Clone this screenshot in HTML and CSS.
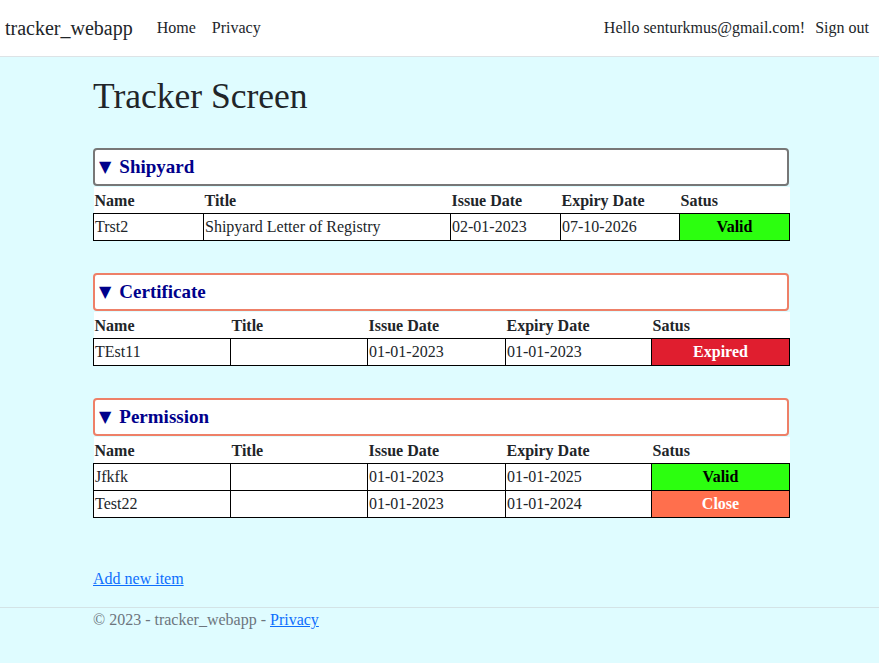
FILE: index.html
```html
<!DOCTYPE html>
<html lang="en">
<head>
<meta charset="utf-8">
<title>Tracker Screen - tracker_webapp</title>
<link rel="stylesheet" href="styles.css">
</head>
<body>
<header class="navbar">
  <div class="nav-left">
    <a class="brand" href="#">tracker_webapp</a>
    <nav class="nav-links">
      <a href="#">Home</a>
      <a href="#">Privacy</a>
    </nav>
  </div>
  <div class="nav-right">
    <span>Hello senturkmus@gmail.com!</span>
    <a href="#">Sign out</a>
  </div>
</header>

<main class="page">
  <div class="container">
    <h1 class="title">Tracker Screen</h1>

    <details class="group" open>
      <summary class="group-head gray"><span class="arrow">▼</span>Shipyard</summary>
      <table class="items">
        <colgroup><col class="s1"><col class="s2"><col class="s3"><col class="s4"><col class="s5"></colgroup>
        <thead><tr><th>Name</th><th>Title</th><th>Issue Date</th><th>Expiry Date</th><th>Satus</th></tr></thead>
        <tbody>
          <tr><td>Trst2</td><td>Shipyard Letter of Registry</td><td>02-01-2023</td><td>07-10-2026</td><td class="st valid">Valid</td></tr>
        </tbody>
      </table>
    </details>

    <details class="group" open>
      <summary class="group-head salmon"><span class="arrow">▼</span>Certificate</summary>
      <table class="items">
        <colgroup><col class="c1"><col class="c2"><col class="c3"><col class="c4"><col class="c5"></colgroup>
        <thead><tr><th>Name</th><th>Title</th><th>Issue Date</th><th>Expiry Date</th><th>Satus</th></tr></thead>
        <tbody>
          <tr><td>TEst11</td><td></td><td>01-01-2023</td><td>01-01-2023</td><td class="st expired">Expired</td></tr>
        </tbody>
      </table>
    </details>

    <details class="group" open>
      <summary class="group-head salmon"><span class="arrow">▼</span>Permission</summary>
      <table class="items">
        <colgroup><col class="c1"><col class="c2"><col class="c3"><col class="c4"><col class="c5"></colgroup>
        <thead><tr><th>Name</th><th>Title</th><th>Issue Date</th><th>Expiry Date</th><th>Satus</th></tr></thead>
        <tbody>
          <tr><td>Jfkfk</td><td></td><td>01-01-2023</td><td>01-01-2025</td><td class="st valid">Valid</td></tr>
          <tr><td>Test22</td><td></td><td>01-01-2023</td><td>01-01-2024</td><td class="st close">Close</td></tr>
        </tbody>
      </table>
    </details>

    <p class="add"><a href="#">Add new item</a></p>
  </div>
</main>

<footer class="footer">
  <div class="container">© 2023 - tracker_webapp - <a href="#">Privacy</a></div>
</footer>
</body>
</html>
```

FILE: styles.css
```css
html, body {
  margin: 0;
  padding: 0;
}
body {
  font-family: "Liberation Serif", "Times New Roman", serif;
  font-size: 16px;
  line-height: 24px;
  color: #212529;
  background: #dffcff;
  min-height: 663px;
}
a { color: #0d6efd; }

.navbar {
  height: 57px;
  background: #fff;
  border-bottom: 1px solid #dde3e6;
  display: flex;
  align-items: center;
  justify-content: space-between;
  padding: 0 10px 0 5px;
  box-sizing: border-box;
}
.nav-left, .nav-right {
  display: flex;
  align-items: center;
}
.brand {
  font-size: 20px;
  color: #212529;
  text-decoration: none;
  margin-right: 24px;
}
.nav-links {
  display: flex;
  gap: 16px;
}
.nav-links a, .nav-right a {
  color: #212529;
  text-decoration: none;
}
.nav-right { gap: 10px; color: #212529; }

.container {
  width: 696px;
  margin: 0 auto;
  padding-left: 3px;
}

.page {
  padding-top: 18px;
}
.title {
  font-size: 35.5px;
  font-weight: 500;
  line-height: 42px;
  margin: 0 0 31px;
}

.group {
  margin-bottom: 32px;
}
.group-head {
  list-style: none;
  background: #fff;
  border: 2px solid #777;
  border-radius: 4px;
  height: 38px;
  box-sizing: border-box;
  display: flex;
  align-items: center;
  padding-left: 4px;
  font-weight: bold;
  font-size: 19px;
  color: #00008b;
  cursor: pointer;
}
.group-head::-webkit-details-marker { display: none; }
.group-head.salmon { border-color: #ee8068; }
.arrow {
  font-family: "DejaVu Sans", sans-serif;
  font-size: 16px;
  margin-right: 8px;
}

.items {
  width: 696px;
  border-collapse: collapse;
  table-layout: fixed;
  margin-top: 1px;
}
.items th {
  background: #fff;
  text-align: left;
  font-weight: bold;
  padding: 1px 1px 0;
  height: 25px;
}
.items td {
  border: 1px solid #000;
  background: #fff;
  padding: 1px 1px;
  height: 24px;
  white-space: nowrap;
  overflow: hidden;
}
.s1 { width: 110px; }
.s2 { width: 247px; }
.s3 { width: 110px; }
.s4 { width: 119px; }
.s5 { width: 110px; }
.c1 { width: 137px; }
.c2 { width: 137px; }
.c3 { width: 138px; }
.c4 { width: 146px; }
.c5 { width: 138px; }

.items td.st {
  text-align: center;
  font-weight: bold;
}
.items td.valid { background: #2cff0f; color: #000; }
.items td.expired { background: #e01e2f; color: #fff; }
.items td.close { background: #ff6f4d; color: #fff; }

.add {
  margin: 49px 0 16px;
}

.footer {
  border-top: 1px solid #d3e3e6;
  color: #6c757d;
}
```
